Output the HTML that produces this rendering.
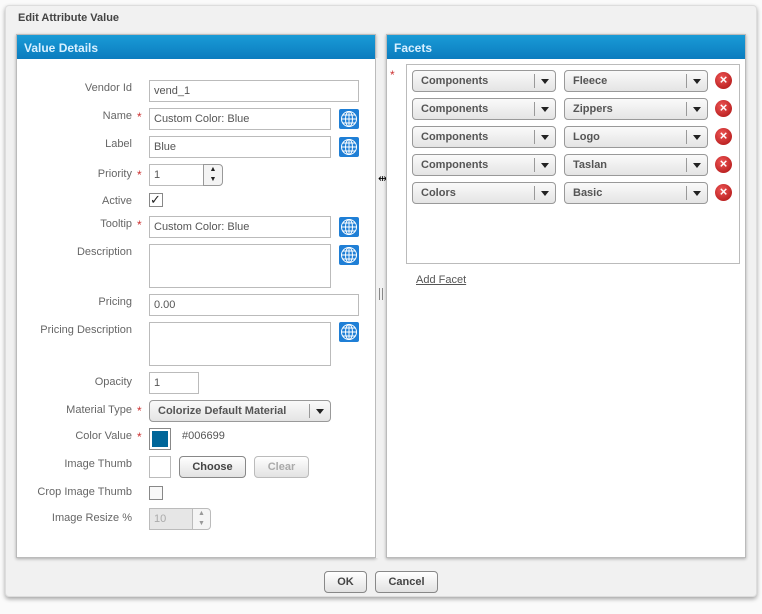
<!DOCTYPE html>
<html><head><style>
*{box-sizing:border-box}
body{margin:0;width:762px;height:614px;background:#fff;font-family:"Liberation Sans","DejaVu Sans",sans-serif;font-size:11px;color:#555;position:relative;overflow:hidden}
.a{position:absolute}
.dlg{left:5px;top:5px;width:752px;height:592px;background:#f1f1f1;border:1px solid #ddd;border-radius:4px;box-shadow:0 2px 4px rgba(0,0,0,.35)}
.panel{background:#fff;border:1px solid #bbb;box-shadow:0 1px 3px rgba(0,0,0,.3)}
.hdr{height:24px;background:linear-gradient(#1a9bd6,#0b7cbf);color:#d8f0ff;font-weight:bold;font-size:12px;padding:6px 0 0 7px}
.lbl{text-align:right;width:115px;left:17px;color:#666}
.in{border:1px solid #bbb;background:#fff;height:22px;padding:4px 4px;color:#555}
.req{color:#c33;font-size:12px}
.globe{width:20px;height:20px;background:#1f7fd6;border-radius:2px}
.dd{border:1px solid #999;border-radius:4px;height:22px;background:linear-gradient(#fafafa,#e4e4e4);font-weight:bold;color:#555;padding:4px 8px}
.dd .s{position:absolute;right:20px;top:3px;height:14px;border-left:1px solid #999}
.dd .t{position:absolute;right:6px;top:8px;border-left:4px solid transparent;border-right:4px solid transparent;border-top:5px solid #222}
.x{width:17px;height:17px;border-radius:50%;background:radial-gradient(circle at 40% 35%,#e55,#a11);color:#fff;font-weight:bold;font-size:13px;text-align:center;line-height:16px}
.btn{border:1px solid #888;border-radius:4px;background:linear-gradient(#fff,#e2e2e2);font-weight:bold;color:#444;text-align:center;height:22px;line-height:20px}
</style></head><body>
<svg width="0" height="0" style="position:absolute"><defs><symbol id="g" viewBox="0 0 20 20"><rect width="20" height="20" rx="2" fill="#1f7fd6"/><g fill="none" stroke="#fff" stroke-width="1"><circle cx="10" cy="10" r="7.5"/><ellipse cx="10" cy="10" rx="3.5" ry="7.5"/><line x1="10" y1="2.5" x2="10" y2="17.5"/><line x1="2.5" y1="10" x2="17.5" y2="10"/><line x1="4" y1="6" x2="16" y2="6"/><line x1="4" y1="14" x2="16" y2="14"/></g></symbol></defs></svg>
<div class="a" style="left:0;top:0;width:762px;height:614px;background:#fafafa"></div>
<div class="a dlg"></div>
<div class="a" style="left:18px;top:12px;font-weight:bold;color:#444">Edit Attribute Value</div>

<div class="a panel" style="left:16px;top:34px;width:360px;height:524px"><div class="hdr">Value Details</div></div>
<div class="a" style="left:375px;top:58px;width:12px;height:500px;background:#f1f1f1;border-left:1px solid #bbb"></div>
<div class="a" style="left:379px;top:288px;width:4px;height:12px;border-left:1px solid #888;border-right:1px solid #888"></div>
<div class="a" style="left:378px;top:172px;font-size:11px;color:#000">⇹</div>
<div class="a panel" style="left:386px;top:34px;width:360px;height:524px"><div class="hdr">Facets</div></div>

<div class="a lbl" style="top:82px">Vendor Id</div>
<div class="a in" style="left:149px;top:80px;width:210px">vend_1</div>
<div class="a lbl" style="top:110px">Name</div><div class="a req" style="left:137px;top:110px">*</div>
<div class="a in" style="left:149px;top:108px;width:182px">Custom Color: Blue</div><svg class="a" style="left:339px;top:109px" width="20" height="20"><use href="#g"/></svg>
<div class="a lbl" style="top:138px">Label</div>
<div class="a in" style="left:149px;top:136px;width:182px">Blue</div><svg class="a" style="left:339px;top:137px" width="20" height="20"><use href="#g"/></svg>
<div class="a lbl" style="top:168px">Priority</div><div class="a req" style="left:137px;top:168px">*</div>
<div class="a in" style="left:149px;top:164px;width:55px">1</div>
<div class="a" style="left:203px;top:164px;width:20px;height:22px;border:1px solid #999;border-radius:0 4px 4px 0;background:#f4f4f4;font-size:7px;text-align:center;line-height:10px;color:#222">▲<br>▼</div>
<div class="a lbl" style="top:195px">Active</div>
<div class="a" style="left:149px;top:193px;width:14px;height:14px;border:1px solid #888;background:#fff;font-size:13px;line-height:12px;color:#222">✓</div>
<div class="a lbl" style="top:218px">Tooltip</div><div class="a req" style="left:137px;top:218px">*</div>
<div class="a in" style="left:149px;top:216px;width:182px">Custom Color: Blue</div><svg class="a" style="left:339px;top:217px" width="20" height="20"><use href="#g"/></svg>
<div class="a lbl" style="top:246px">Description</div>
<div class="a in" style="left:149px;top:244px;width:182px;height:44px"></div><svg class="a" style="left:339px;top:245px" width="20" height="20"><use href="#g"/></svg>
<div class="a lbl" style="top:296px">Pricing</div>
<div class="a in" style="left:149px;top:294px;width:210px">0.00</div>
<div class="a lbl" style="top:324px">Pricing Description</div>
<div class="a in" style="left:149px;top:322px;width:182px;height:44px"></div><svg class="a" style="left:339px;top:322px" width="20" height="20"><use href="#g"/></svg>
<div class="a lbl" style="top:376px">Opacity</div>
<div class="a in" style="left:149px;top:372px;width:50px">1</div>
<div class="a lbl" style="top:404px">Material Type</div><div class="a req" style="left:137px;top:404px">*</div>
<div class="a dd" style="left:149px;top:400px;width:182px">Colorize Default Material<span class="s"></span><span class="t"></span></div>
<div class="a lbl" style="top:430px">Color Value</div><div class="a req" style="left:137px;top:430px">*</div>
<div class="a" style="left:149px;top:428px;width:22px;height:22px;border:1px solid #888;background:#fff;padding:2px"><div style="width:16px;height:16px;background:#006699"></div></div>
<div class="a" style="left:182px;top:430px">#006699</div>
<div class="a lbl" style="top:458px">Image Thumb</div>
<div class="a in" style="left:149px;top:456px;width:22px"></div>
<div class="a btn" style="left:179px;top:456px;width:67px">Choose</div>
<div class="a btn" style="left:254px;top:456px;width:55px;border-color:#bbb;color:#aaa">Clear</div>
<div class="a lbl" style="top:486px">Crop Image Thumb</div>
<div class="a" style="left:149px;top:486px;width:14px;height:14px;border:1px solid #888;background:#f8f8f8"></div>
<div class="a lbl" style="top:512px">Image Resize %</div>
<div class="a in" style="left:149px;top:508px;width:44px;background:#e6e6e6;color:#aaa">10</div>
<div class="a" style="left:192px;top:508px;width:19px;height:22px;border:1px solid #bbb;border-radius:0 4px 4px 0;background:#f4f4f4;font-size:7px;text-align:center;line-height:10px;color:#999">▲<br>▼</div>

<div class="a req" style="left:390px;top:68px">*</div>
<div class="a" style="left:406px;top:64px;width:334px;height:200px;border:1px solid #bbb;background:#fff"></div>
<div class="a dd" style="left:412px;top:70px;width:144px">Components<span class="s"></span><span class="t"></span></div>
<div class="a dd" style="left:564px;top:70px;width:144px">Fleece<span class="s"></span><span class="t"></span></div><div class="a x" style="left:715px;top:72px">×</div>
<div class="a dd" style="left:412px;top:98px;width:144px">Components<span class="s"></span><span class="t"></span></div>
<div class="a dd" style="left:564px;top:98px;width:144px">Zippers<span class="s"></span><span class="t"></span></div><div class="a x" style="left:715px;top:100px">×</div>
<div class="a dd" style="left:412px;top:126px;width:144px">Components<span class="s"></span><span class="t"></span></div>
<div class="a dd" style="left:564px;top:126px;width:144px">Logo<span class="s"></span><span class="t"></span></div><div class="a x" style="left:715px;top:128px">×</div>
<div class="a dd" style="left:412px;top:154px;width:144px">Components<span class="s"></span><span class="t"></span></div>
<div class="a dd" style="left:564px;top:154px;width:144px">Taslan<span class="s"></span><span class="t"></span></div><div class="a x" style="left:715px;top:156px">×</div>
<div class="a dd" style="left:412px;top:182px;width:144px">Colors<span class="s"></span><span class="t"></span></div>
<div class="a dd" style="left:564px;top:182px;width:144px">Basic<span class="s"></span><span class="t"></span></div><div class="a x" style="left:715px;top:184px">×</div>
<div class="a" style="left:416px;top:274px;text-decoration:underline;color:#555">Add Facet</div>

<div class="a btn" style="left:324px;top:571px;width:43px">OK</div>
<div class="a btn" style="left:375px;top:571px;width:63px">Cancel</div>
</body></html>
